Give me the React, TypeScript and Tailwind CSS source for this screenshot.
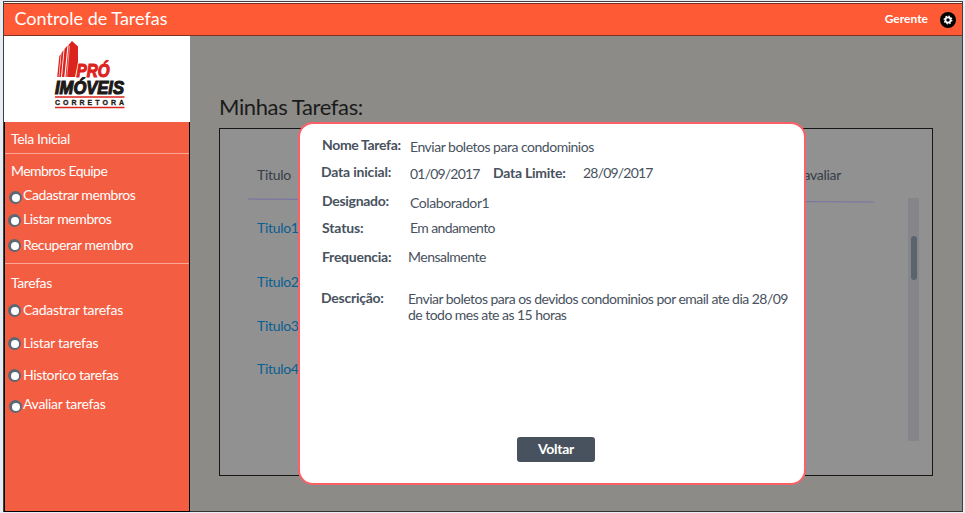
import React from "react";

type Item = { label: string; row: string; dot: string; text: string };

const members: Item[] = [
  { label: "Cadastrar membros", row: "h-6", dot: "ml-1 mt-[6px]", text: "ml-px tracking-[-0.42px]" },
  { label: "Listar membros", row: "h-[26px]", dot: "ml-[3px] mt-[5px]", text: "ml-[2px] tracking-[-0.4px]" },
  { label: "Recuperar membro", row: "h-7", dot: "ml-[3px] mt-1", text: "ml-[2px] tracking-[-0.42px]" },
];

const tasks: Item[] = [
  { label: "Cadastrar tarefas", row: "h-[33px]", dot: "ml-[3px] mt-1", text: "ml-[2px] tracking-[-0.27px]" },
  { label: "Listar tarefas", row: "h-8", dot: "ml-[3px] mt-1", text: "ml-[2px] tracking-[-0.27px]" },
  { label: "Historico tarefas", row: "h-[29px]", dot: "ml-[3px] mt-1", text: "ml-[2px] tracking-[-0.35px]" },
  { label: "Avaliar tarefas", row: "h-7", dot: "ml-1 mt-[6px]", text: "ml-px tracking-[-0.3px]" },
];

function NavItem({ item }: { item: Item }) {
  return (
    <li className={"flex items-start " + item.row}>
      <span className={"size-[13px] shrink-0 rounded-full bg-[#5b6876] p-[2.5px] " + item.dot}>
        <span className="block size-2 rounded-full bg-white" />
      </span>
      <span className={"leading-5 whitespace-nowrap " + item.text}>{item.label}</span>
    </li>
  );
}

function Logo() {
  return (
    <svg width="74" height="72" viewBox="0 0 74 72" className="mt-[3px] ml-[50px] overflow-visible" fontFamily="Liberation Sans, sans-serif" fontWeight="700">
      <g fill="#dc241f">
        <path d="M14.500 6 18 2 24 7.500V23L21 38H11.500Z" />
        <path d="M10.500 10 13.500 6.500 10.300 38H8Z" />
        <path d="M7.500 14 9.600 11 7 38H5.200Z" />
        <path d="M5.300 17 6.800 15 4.600 38H3.200Z" />
      </g>
      <path d="M15.500 7 12.800 38" stroke="#fff" strokeWidth=".5" />
      <text x="22.500" y="37.500" fontSize="17.500" fontStyle="italic" fill="#dc241f" stroke="#dc241f" strokeWidth="1.100" textLength="33" lengthAdjust="spacingAndGlyphs">PRÓ</text>
      <text x="1" y="54.500" fontSize="18.500" fontStyle="italic" fill="#1d1918" stroke="#1d1918" strokeWidth="1.200" textLength="69" lengthAdjust="spacingAndGlyphs">IMÓVEIS</text>
      <path d="M1 58H70.500M1 68.500H70.500" stroke="#dc241f" strokeWidth="1.600" />
      <text x="1" y="66" fontSize="7" fill="#1d1918" stroke="#1d1918" strokeWidth=".3" textLength="69">CORRETORA</text>
    </svg>
  );
}

function Sidebar() {
  return (
    <aside className="flex w-[186px] shrink-0 flex-col">
      <div className="h-[86px] bg-white">
        <Logo />
      </div>
      <nav className="flex-1 border-r border-b border-l border-black bg-[#f35d41] text-[14px] leading-5 text-white">
        <div className="h-[32px] border-b border-[#fba595] pt-[7px] pl-[6px] tracking-[-0.35px]">Tela Inicial</div>
        <div className="h-[110px] border-b border-[#fba595] pt-[7px]">
          <h2 className="h-6 pl-[6px] tracking-[-0.55px]">Membros Equipe</h2>
          <ul>{members.map((m) => <NavItem key={m.label} item={m} />)}</ul>
        </div>
        <div className="pt-[9px]">
          <h2 className="h-[27px] pl-[6px] tracking-[-0.4px]">Tarefas</h2>
          <ul>{tasks.map((t) => <NavItem key={t.label} item={t} />)}</ul>
        </div>
      </nav>
    </aside>
  );
}

function TaskPanel() {
  return (
    <section className="flex h-[348px] w-[714px] border border-[#161616] bg-[#919191] text-[14px] leading-5 tracking-[-0.3px]">
      <div className="ml-[28px] w-[627px] pt-[36px]">
        <div className="flex h-5 justify-between pr-[34px] pl-[9px] text-[#353d48]">
          <span>Titulo</span>
          <span>A avaliar</span>
        </div>
        <svg width="627" height="6" viewBox="0 0 627 6" className="mt-[12px] block">
          <path d="M0 2 626 5" stroke="#7a75a0" strokeWidth="1.200" />
        </svg>
        <ul className="pt-[15px] pl-[9px] text-[#075f92]">
          <li className="h-[54px]">Titulo1</li>
          <li className="h-[44px]">Titulo2</li>
          <li className="h-[43px]">Titulo3</li>
          <li>Titulo4</li>
        </ul>
      </div>
      <div className="mt-[69px] ml-[33px] h-[243px] w-[11px] bg-[#858689] pt-[38px] pl-[3px]">
        <div className="h-[44px] w-[6px] rounded-full bg-[#5b636d]" />
      </div>
    </section>
  );
}

type FieldProps = { label: string; row: string; labelClass: string; valueClass: string; children: React.ReactNode };

function Field({ label, row, labelClass, valueClass, children }: FieldProps) {
  return (
    <div className={"flex items-start " + row}>
      <dt className={"shrink-0 font-bold " + labelClass}>{label}</dt>
      <dd className={"whitespace-nowrap " + valueClass}>{children}</dd>
    </div>
  );
}

function TaskDialog() {
  return (
    <div role="dialog" className="absolute top-[122px] left-[298px] flex h-[363px] w-[508px] flex-col rounded-[15px] border-2 border-[#fc6067] bg-white pt-[11px] text-[14px] leading-5 text-[#48525e]">
      <dl className="h-[302px]">
        <Field label="Nome Tarefa:" row="h-[27px]" labelClass="ml-[22px] w-[88px] tracking-[-0.35px]" valueClass="pt-[2px] tracking-[-0.49px]">Enviar boletos para condominios</Field>
        <div className="flex h-[29px] items-start">
          <Field label="Data inicial:" row="" labelClass="ml-[21px] w-[89px] tracking-[-0.2px]" valueClass="w-[83px] pt-[2px] tracking-[-0.8px]">01/09/2017</Field>
          <Field label="Data Limite:" row="" labelClass="w-[90px] pt-px tracking-[-0.25px]" valueClass="pt-px tracking-[-0.8px]">28/09/2017</Field>
        </div>
        <Field label="Designado:" row="h-[27px]" labelClass="ml-[22px] w-[88px] tracking-[-0.3px]" valueClass="pt-[2px] tracking-[-0.4px]">Colaborador1</Field>
        <Field label="Status:" row="h-[29px]" labelClass="ml-[22px] w-[88px] tracking-[-0.15px]" valueClass="tracking-[-0.6px]">Em andamento</Field>
        <Field label="Frequencia:" row="h-[41px]" labelClass="ml-[22px] w-[86px] tracking-[-0.25px]" valueClass="tracking-[-0.5px]">Mensalmente</Field>
        <Field label="Descrição:" row="h-10" labelClass="ml-[21px] w-[87px] tracking-[-0.25px]" valueClass="pt-[3px] leading-4 tracking-[-0.53px]">
          Enviar boletos para os devidos condominios por email ate dia 28/09<br />de todo mes ate as 15 horas
        </Field>
      </dl>
      <button className="ml-[217px] h-[25px] w-[78px] rounded-[3px] bg-[#48525e] pb-px text-[14px] leading-5 font-bold tracking-[-0.3px] text-white">Voltar</button>
    </div>
  );
}

export default function App() {
  return (
    <div className="relative h-[513px] w-[965px] overflow-hidden bg-[#e8edf3] pt-px pl-[3px] font-['Lato',sans-serif]">
      <div className="flex h-[511px] w-[960px] flex-col border-t border-r border-l border-[#42403f] bg-white pt-px">
        <header className="flex h-[33px] shrink-0 items-center border-t border-b border-[#80301f] bg-[#ff5a36] pl-[10.5px] text-white">
          <h1 className="mt-[-2px] text-[18px] leading-[31px]">Controle de Tarefas</h1>
          <span className="mt-[-2px] mr-[12px] ml-auto text-[12px] font-bold">Gerente</span>
          <svg width="16" height="16" viewBox="0 0 16 16" className="mr-[6px]">
            <circle cx="8" cy="8" r="8" fill="#000" />
            <circle cx="8" cy="8" r="3.700" fill="none" stroke="#fff" strokeWidth="1.500" strokeDasharray="1.450 1.450" />
            <circle cx="8" cy="8" r="2.600" fill="none" stroke="#fff" strokeWidth="1.700" />
          </svg>
        </header>
        <div className="flex flex-1">
          <Sidebar />
          <main className="flex-1 border-b border-[#333] bg-[#8c8b88] pt-[57px] pl-[29px]">
            <h2 className="h-[35px] text-[22px] leading-[27px] tracking-[-0.38px] text-[#1b1b1b]">Minhas Tarefas:</h2>
            <TaskPanel />
          </main>
        </div>
      </div>
      <TaskDialog />
    </div>
  );
}
